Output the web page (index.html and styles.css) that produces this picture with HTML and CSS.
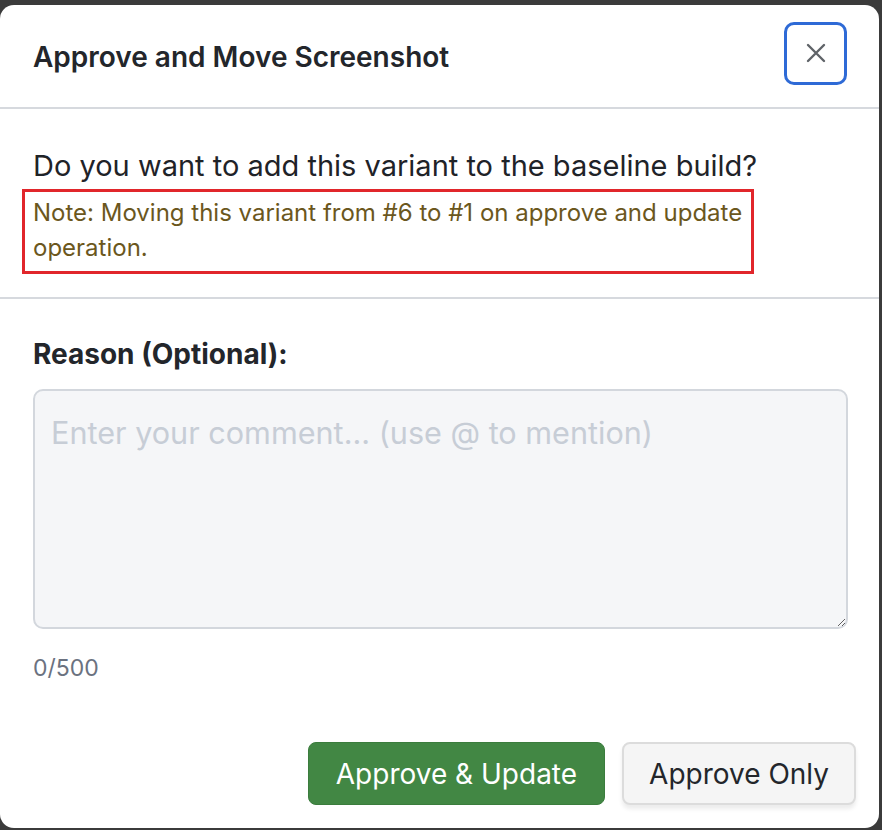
FILE: index.html
```html
<!DOCTYPE html>
<html>
<head>
<meta charset="utf-8">
<link rel="stylesheet" href="styles.css">
</head>
<body>
<div class="backdrop">
  <div class="modal">
    <div class="modal-header">
      <h2 class="title">Approve and Move Screenshot</h2>
      <button class="close-btn" aria-label="Close">
        <svg width="22" height="22" viewBox="0 0 22 22"><path d="M3 3 L19 19 M19 3 L3 19" stroke="#5f6368" stroke-width="2.4" stroke-linecap="round" fill="none"/></svg>
      </button>
    </div>
    <div class="modal-section">
      <p class="question">Do you want to add this variant to the baseline build?</p>
      <div class="note">Note: Moving this variant from #6 to #1 on approve and update operation.</div>
    </div>
    <div class="modal-body">
      <label class="reason-label">Reason (Optional):</label>
      <textarea class="comment" placeholder="Enter your comment... (use @ to mention)"></textarea>
      <div class="counter">0/500</div>
      <div class="actions">
        <button class="btn btn-primary">Approve &amp; Update</button>
        <button class="btn btn-secondary">Approve Only</button>
      </div>
    </div>
  </div>
</div>
</body>
</html>
```
FILE: styles.css
```css
html, body {
  margin: 0;
  padding: 0;
  background: #3b3b3b;
  font-family: Inter, "Noto Sans", sans-serif;
}
.backdrop {
  width: 882px;
  height: 830px;
  padding-top: 5px;
  box-sizing: border-box;
}
.modal {
  width: 879px;
  height: 823px;
  background: #fff;
  border-radius: 14px;
  box-sizing: border-box;
  display: flex;
  flex-direction: column;
}
.modal-header {
  height: 104px;
  box-sizing: border-box;
  display: flex;
  align-items: center;
  justify-content: space-between;
  padding: 0 32px 0 33px;
  border-bottom: 2px solid #d6d9de;
}
.title {
  margin: 0;
  font-size: 28px;
  font-weight: 600;
  color: #23262b;
  margin-top: 2px;
}
.close-btn {
  width: 63px;
  height: 63px;
  box-sizing: border-box;
  border: 3px solid #2e6ad6;
  border-radius: 10px;
  background: #fff;
  display: flex;
  align-items: center;
  justify-content: center;
  padding: 0;
  margin-top: -6px;
}
.modal-section {
  padding: 40px 33px 23px 22px;
  border-bottom: 2px solid #d6d9de;
}
.question {
  margin: 0 0 6px 11px;
  font-size: 29px;
  color: #1f2328;
  line-height: 34px;
}
.note {
  width: 732px;
  box-sizing: border-box;
  border: 3px solid #e1262b;
  padding: 3px 8px 6px 8px;
  font-size: 24px;
  line-height: 35px;
  color: #6b571d;
}
.modal-body {
  padding: 40px 31px 0 33px;
  display: flex;
  flex-direction: column;
}
.reason-label {
  font-size: 28px;
  font-weight: 700;
  color: #23262b;
  line-height: 30px;
}
.comment {
  margin-top: 20px;
  width: 815px;
  height: 240px;
  box-sizing: border-box;
  background: #f5f6f8;
  border: 2px solid #d3d7dd;
  border-radius: 10px;
  padding: 24px 16px;
  font-family: Inter, "Noto Sans", sans-serif;
  font-size: 30.6px;
  line-height: 36px;
  color: #1f2328;
  resize: vertical;
  outline: none;
}
.comment::placeholder {
  color: #c7cdd6;
}
.counter {
  margin-top: 25px;
  font-size: 23px;
  color: #6b7280;
}
.actions {
  display: flex;
  justify-content: flex-end;
  gap: 17px;
  margin-top: 60px;
  margin-right: -8px;
}
.btn {
  height: 63px;
  border-radius: 8px;
  font-family: Inter, "Noto Sans", sans-serif;
  font-size: 28px;
  padding: 0 27px;
  box-sizing: border-box;
}
.btn-primary {
  background: #428744;
  color: #fff;
  border: 1px solid #3b7c3d;
}
.btn-secondary {
  background: #f5f5f5;
  color: #23262b;
  border: 2px solid #dcdcdc;
  padding: 0 25px;
  box-shadow: 0 4px 4px rgba(0,0,0,0.08);
}
```
